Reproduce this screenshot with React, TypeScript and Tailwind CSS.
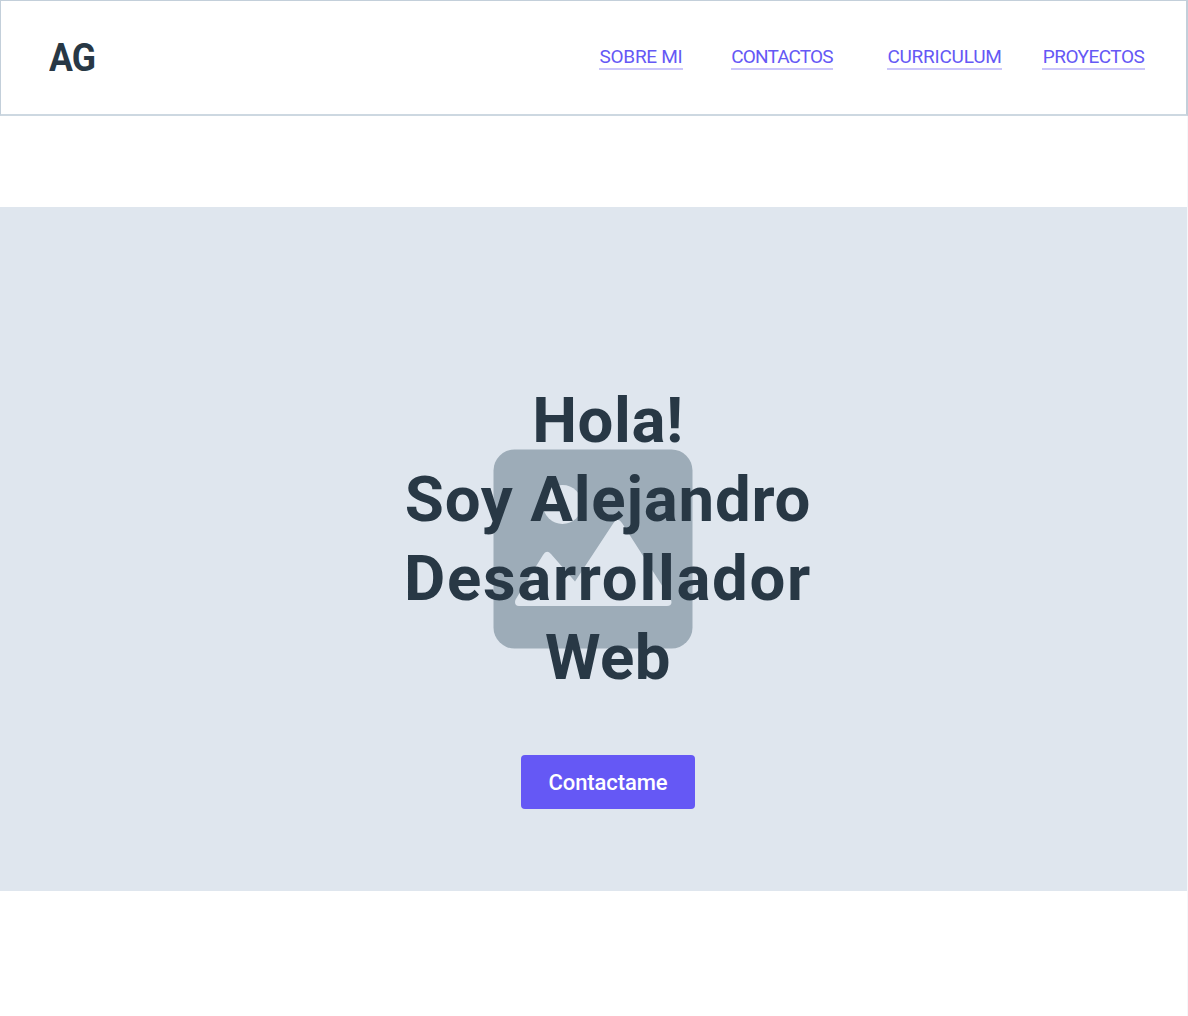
const links = [
  { label: 'SOBRE MI', box: 'w-[84px] tracking-[-0.3px]' },
  { label: 'CONTACTOS', box: 'w-[102px] ml-[48px] tracking-[-0.85px]' },
  { label: 'CURRICULUM', box: 'w-[115px] ml-[54px] tracking-[-0.25px]' },
  { label: 'PROYECTOS', box: 'w-[103px] ml-[40px] tracking-[-0.5px]' },
];

function Placeholder() {
  return (
    <svg
      className="absolute left-[493px] top-[242px]"
      width="200"
      height="200"
      viewBox="0 0 200 200"
      aria-hidden="true"
    >
      <rect x="0.5" y="0.5" width="199" height="199" rx="21" fill="#9dacb8" />
      <circle cx="69.5" cy="55.5" r="19.5" fill="#dfe6ee" />
      <path
        d="M22 153 Q22 151 23.500 149 L50 106 Q53.500 100 58 105 L82 132.500 L120.500 74 Q124.500 67.500 129 74 L177 149 Q178.500 151 178.500 153 Q178.500 157 174 157 H26 Q22 157 22 153 Z"
        fill="#dfe6ee"
      />
    </svg>
  );
}

export default function App() {
  return (
    <div className="flex h-[1016px] w-[1188px] flex-col overflow-hidden bg-white font-['Roboto','Liberation_Sans',sans-serif] text-[#283845]">
      <header className="flex h-[116px] justify-between border border-r-2 border-b-2 border-[#c3cfda] border-b-[#cdd8e1] pl-[48px] pr-[41px]">
        <div className="mt-[33px] origin-left scale-x-90 text-[39.5px] font-bold leading-[48px] tracking-[-0.8px]">AG</div>
        <nav className="mt-[44px] flex">
          {links.map((link) => (
            <a
              key={link.label}
              href="#"
              className={`${link.box} flex h-[25px] justify-center whitespace-nowrap border-b-2 border-[#cbc6fa] text-[19px] leading-[24px] text-[#6558f5]`}
            >
              {link.label}
            </a>
          ))}
        </nav>
      </header>
      <div className="flex-1 border-r border-[#f5f7fa]">
        <main className="relative mt-[91px] flex h-[684px] flex-col items-center bg-[#dfe6ee] pl-[29px]">
          <Placeholder />
          <h1 className="relative mt-[174px] flex flex-col items-center whitespace-nowrap text-[63.5px] font-bold leading-[79px]">
            <span className="tracking-[0.6px]">Hola!</span>
            <span className="tracking-[0.8px]">Soy Alejandro</span>
            <span className="tracking-[1.7px]">Desarrollador</span>
            <span className="tracking-[0.5px]">Web</span>
          </h1>
          <button className="relative mt-[58px] h-[54px] w-[174px] rounded-[4px] bg-[#6558f5] text-[22px] font-medium tracking-[-0.1px] text-white">
            Contactame
          </button>
        </main>
      </div>
    </div>
  );
}
